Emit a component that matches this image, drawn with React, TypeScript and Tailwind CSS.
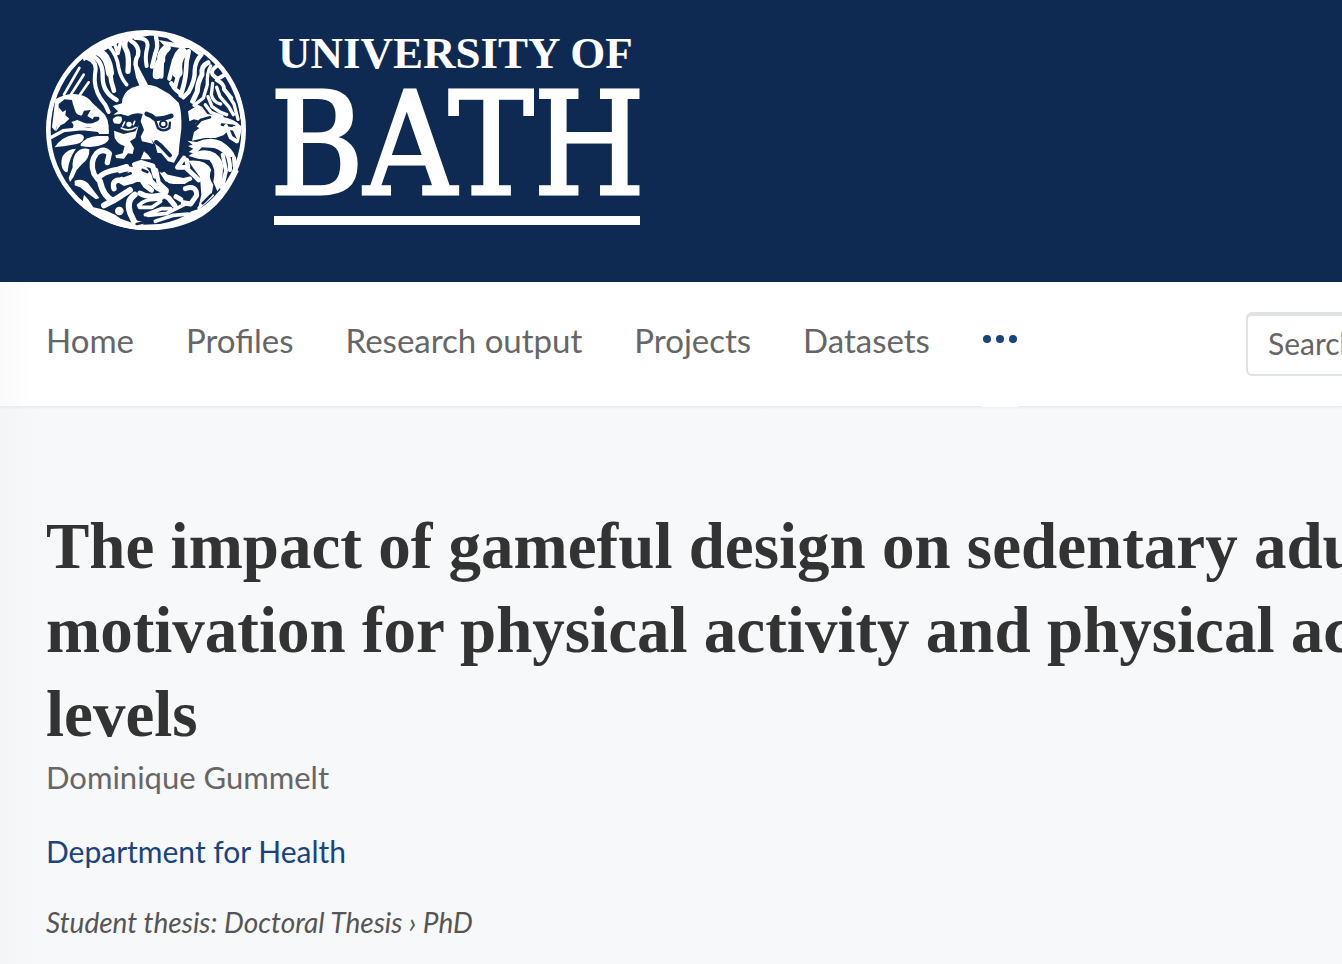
import React from 'react';

interface NavItem {
  label: string;
  href: string;
}

const navItems: NavItem[] = [
  { label: 'Home', href: '#home' },
  { label: 'Profiles', href: '#profiles' },
  { label: 'Research output', href: '#publications' },
  { label: 'Projects', href: '#projects' },
  { label: 'Datasets', href: '#datasets' },
];

function Medallion() {
  return (
    <svg className="h-50 w-50 shrink-0" viewBox="18 18 600 600" aria-hidden="true">
      <circle cx="318" cy="318" r="293" fill="none" stroke="#fff" strokeWidth="14" />

      {/* hair, left half */}
      <g stroke="#fff" strokeLinecap="round" strokeLinejoin="round" fill="none">
        <path strokeWidth="8" d="M118 132L72 212M131 152L94 210M146 175L120 212" />
        <path strokeWidth="12" d="M142 102Q174 112 165 150Q160 190 182 224Q198 242 206 264" />
        <path strokeWidth="13" d="M152 94Q190 108 188 160Q188 206 230 228" />
        <path strokeWidth="24" d="M180 86Q204 98 210 146" />
        <path strokeWidth="14" d="M210 146Q212 172 222 200" />
        <path strokeWidth="11" d="M206 66Q232 94 236 132Q242 162 260 182M224 60L234 88L242 54" />
        <path strokeWidth="16" d="M264 40Q246 60 260 80Q268 98 264 142" />
        <path strokeWidth="13" d="M272 50Q300 66 294 94Q282 112 290 134L306 178" />
        <path strokeWidth="12" d="M286 42Q328 40 322 70Q314 98 320 126" />
        <path fill="#fff" stroke="none" d="M126 98L205 50L300 24H336V34L286 42L240 54L192 80L172 94L150 98L132 112Z" />
        <path fill="#fff" stroke="none" d="M280 118L296 130L324 182L300 190L288 160Z" />
      </g>

      {/* hair, right half */}
      <g stroke="#fff" strokeLinecap="round" strokeLinejoin="round" fill="none">
        <path strokeWidth="13" d="M348 40Q356 66 346 88L336 128" />
        <path strokeWidth="24" d="M380 72Q360 90 364 108Q350 126 350 154" />
        <path strokeWidth="13" d="M366 108L364 158" />
        <path strokeWidth="32" d="M426 86Q406 104 412 146" />
        <path strokeWidth="13" d="M402 110L388 164M418 140L404 194L394 178M406 196L418 206" />
        <path strokeWidth="14" d="M446 82Q438 112 438 142Q436 172 422 214" />
        <path strokeWidth="13" d="M484 92Q464 112 464 142Q466 166 446 204L430 220" />
        <path strokeWidth="15" d="M504 116Q482 126 486 152Q472 178 472 202L458 232" />
        <path strokeWidth="10" d="M512 126Q500 146 502 182L490 222L462 244" />
        <path strokeWidth="12" d="M530 126Q500 148 534 164L554 152M530 168Q554 180 552 196L574 222" />
        <path strokeWidth="10" d="M518 178L514 212Q520 236 542 240M530 190L540 218L566 248L580 272M556 200L582 240L594 286M574 178Q596 206 602 246L606 282" />
        <path strokeWidth="10" d="M504 218L516 248L540 264L560 272M496 242L514 266L546 278" />
        <path fill="#fff" stroke="none" d="M330 20Q400 30 456 60L492 94L474 92L446 72Q410 74 370 62L356 48L402 56L380 42L330 34Z" />
      </g>

      {/* wings beside the face */}
      <g fill="#fff">
        <path d="M46 226Q84 204 118 212Q144 216 158 238L184 262Q210 280 206 330H178Q164 308 140 310L96 314Q106 304 94 294L112 288L132 296Q152 302 166 294Q184 288 176 278L162 278L158 286L142 276L152 258L132 260L126 274Q108 276 104 256Q98 240 96 228L74 226L56 240L56 286L46 322L36 310Z" />
        <path d="M56 250L68 264L78 258L76 274L88 284L74 298L62 304L48 322Z" />
        <path d="M444 262L466 248L464 238L486 248L502 270L546 278Q586 286 600 304L594 322L568 318L550 334L526 342L494 342L456 350L462 324L478 312L460 304L478 290L462 286L448 292Z" />
        <path d="M442 350L470 354Q512 336 544 352Q578 374 586 398L564 400Q542 378 522 372L486 370L466 390L446 384L460 374L444 366L458 362Z" />
      </g>
      <g fill="none" stroke="#0f2a52" strokeWidth="8" strokeLinecap="round">
        <path d="M448 304L468 304L482 288L510 280M546 302L582 306" />
      </g>
      <path d="M558 306L572 340L590 352M582 312L594 338L600 310" fill="none" stroke="#fff" strokeWidth="12" strokeLinecap="round" />

      {/* face */}
      <g fill="#fff">
        <path d="M218 246L246 238Q246 208 274 192Q314 174 350 188L388 210L416 236Q426 262 424 316L418 364L416 390L402 416L384 412L364 388L352 386L346 362L334 346L340 360L326 356L306 352L302 338L312 318L302 292L308 270Q284 264 264 276L242 270L220 272L234 262Z" />
        <path d="M218 288Q224 274 244 278Q250 290 238 300L222 298Z" />
        <path d="M222 320L250 330L286 322L296 304L286 342L270 352L282 372L278 390L264 388L252 404L228 402L226 394L248 388L254 366Q234 362 224 342Z" />
        <path d="M312 382L324 392L334 406L302 406Z" />
        <circle cx="267" cy="301" r="8" />
      </g>
      <g fill="none" stroke="#fff" strokeWidth="5" strokeLinecap="round">
        <path d="M248 306L254 294M244 312Q266 324 288 310M280 302L284 292" />
      </g>
      <g fill="none" stroke="#0f2a52" strokeLinecap="round" strokeLinejoin="round">
        <path strokeWidth="14" d="M320 270Q334 274 344 284Q370 286 394 276" />
        <path strokeWidth="7" d="M346 290L354 312Q370 326 388 312L390 296" />
        <circle cx="370" cy="300" r="10" strokeWidth="6" />
        <path strokeWidth="12" d="M348 354L362 364L390 394" />
      </g>

      {/* leaves at the left edge */}
      <path d="M30 342L70 320L126 314L206 322" fill="none" stroke="#fff" strokeWidth="10" />
      <g fill="#fff">
        <path d="M44 370Q64 338 102 332Q128 326 132 340Q130 356 110 360L76 366Z" />
        <path d="M122 360Q140 338 172 336L204 336Q212 346 196 358Q166 374 122 366Z" />
        <path d="M68 396Q84 374 108 374Q88 402 84 434Q84 452 72 440Q58 424 68 396Z" />
        <path d="M106 390Q124 368 148 376Q150 404 124 422L110 438Q102 460 90 474L86 462L98 430Q96 408 106 390Z" />
        <path d="M104 470Q128 462 144 478L178 522L168 526L146 510L120 490L104 484Z" />
      </g>

      {/* beard */}
      <g fill="none" stroke="#fff" strokeLinecap="round" strokeLinejoin="round">
        <path strokeWidth="16" d="M202 416L208 388Q190 370 170 388Q148 414 162 450L174 466Q184 444 234 436L260 428" />
        <path strokeWidth="18" d="M180 472Q190 518 220 530L270 498M222 528L192 544" />
        <path strokeWidth="16" d="M222 494Q214 468 242 468L264 458L284 436M240 440Q268 428 286 442M284 422L302 416L338 426L346 456" />
        <path strokeWidth="16" d="M270 472L302 462L316 484L334 498M304 462L334 474L352 492L378 504" />
        <path strokeWidth="18" d="M284 512Q258 530 270 566L284 596" />
        <path strokeWidth="16" d="M300 508Q324 524 368 512L386 522L404 544" />
        <path strokeWidth="11" d="M296 544Q314 526 344 526L366 522M298 550L336 550L362 532M316 572L364 554L392 554M324 574L380 568L440 538M346 592L400 574L444 570" />
        <path strokeWidth="13" d="M348 438L356 476L380 498M372 450L390 472L416 472L450 464" />
        <path strokeWidth="14" d="M432 402L412 430L436 430L460 452L476 468M440 408L444 428" />
        <path strokeWidth="15" d="M436 494Q470 482 470 514L452 540L430 536M408 518L422 526" />
        <path strokeWidth="12" d="M550 374Q572 400 570 438M548 392L558 440L546 492M582 402L584 426" />
        <path strokeWidth="8" d="M476 552L518 514" />
      </g>
      <g fill="#fff">
        <path d="M266 442L294 420L320 430L334 450L346 490L318 478L296 460L282 478L252 486L238 478Z" />
        <path d="M358 444L384 452L430 462L458 466L434 480L400 480L376 472Z" />
        <path d="M454 390Q494 368 526 388Q556 410 548 446L546 484L532 502L520 474Q530 432 508 408L474 404L446 396Z" />
        <path d="M446 410Q500 406 514 438Q502 458 520 482L514 518Q496 542 474 554L484 512L480 460L458 430Z" />
        <path d="M52 440Q84 496 128 532L132 512L146 528L160 550Q208 558 242 584L276 596L284 588L310 594V602L360 600Q420 590 454 562L486 552Q554 502 586 430L596 442Q540 564 444 598Q374 624 300 618Q194 608 120 542Q72 496 52 440Z" />
        <circle cx="238" cy="561" r="13" />
      </g>
      <g fill="none" stroke="#0f2a52" strokeWidth="8" strokeLinecap="round" strokeLinejoin="round">
        <path d="M308 438L322 444M250 456L272 448M488 538L514 512M290 600L308 596" />
      </g>
    </svg>
  );
}

function Logo() {
  return (
    <a href="#bath" aria-label="University of Bath" className="flex w-fit gap-7 text-white">
      <Medallion />
      <svg className="h-50 w-[368px] shrink-0 overflow-visible" viewBox="0 0 368 200" fill="currentColor">
        <text x="4" y="38" className="font-['Liberation_Serif',serif] text-[45px] font-bold">UNIVERSITY OF</text>
        <text x="-4" y="164" stroke="currentColor" strokeWidth="3" className="font-['DejaVu_Serif_Condensed','DejaVu_Serif',serif] text-[142px]">BATH</text>
        <rect x="0" y="186" width="366" height="9" />
      </svg>
    </a>
  );
}

export default function App() {
  return (
    <div className="min-h-screen overflow-hidden bg-[#f7f8fa] font-[Lato,sans-serif] text-[#666]">
      <header className="relative">
        <div className="bg-[#0f2a52] px-[46px] pt-[30px] pb-[52px]">
          <Logo />
        </div>

        <div className="flex h-[125px] border-b border-[#eaebef] bg-linear-to-r from-[#fafafa] to-white to-[36px] pl-[46px] shadow-xs">
          <nav className="flex shrink-0 gap-[52px] text-[33px] leading-[116px]" aria-label="Main">
            {navItems.map((item) => (
              <a key={item.label} href={item.href} className="whitespace-nowrap">
                {item.label}
              </a>
            ))}
            <button type="button" aria-label="More navigation options" className="-mb-px flex h-[125px] w-9 items-center justify-center gap-[5px] bg-white pb-3 text-[#1a4480]">
              <span className="size-2 rounded-full bg-current" />
              <span className="size-2 rounded-full bg-current" />
              <span className="size-2 rounded-full bg-current" />
            </button>
          </nav>
          <form className="ml-auto -mr-[464px] w-[560px] shrink-0 pt-[30px]">
            <input
              type="search"
              aria-label="Search"
              placeholder="Search by expertise, name or affiliation"
              className="h-16 w-full rounded-md border-2 border-t-4 border-[#dfe3e6] bg-white px-5 pb-1 text-[30px] placeholder:text-[#666]"
            />
          </form>
        </div>
      </header>

      <main className="bg-linear-to-r from-[#f4f5f7] to-[#f7f8fa] to-[36px] pt-[97px] pb-8 pl-[46px]">
        <h1 className="font-['Liberation_Serif',serif] text-[65px] leading-[84px] font-bold whitespace-nowrap text-[#333]">
          The impact of gameful design on sedentary adults’
          <br />
          motivation for physical activity and physical activity
          <br />
          levels
        </h1>
        <p className="text-[31px] leading-[42px]">Dominique Gummelt</p>
        <p className="mt-8 text-[30px] leading-[42px]">
          <a href="#department" className="text-[#1a4480]">
            Department for Health
          </a>
        </p>
        <p className="mt-8 text-[28px] leading-[36px] text-[#555] italic">Student thesis: Doctoral Thesis › PhD</p>
      </main>
    </div>
  );
}
